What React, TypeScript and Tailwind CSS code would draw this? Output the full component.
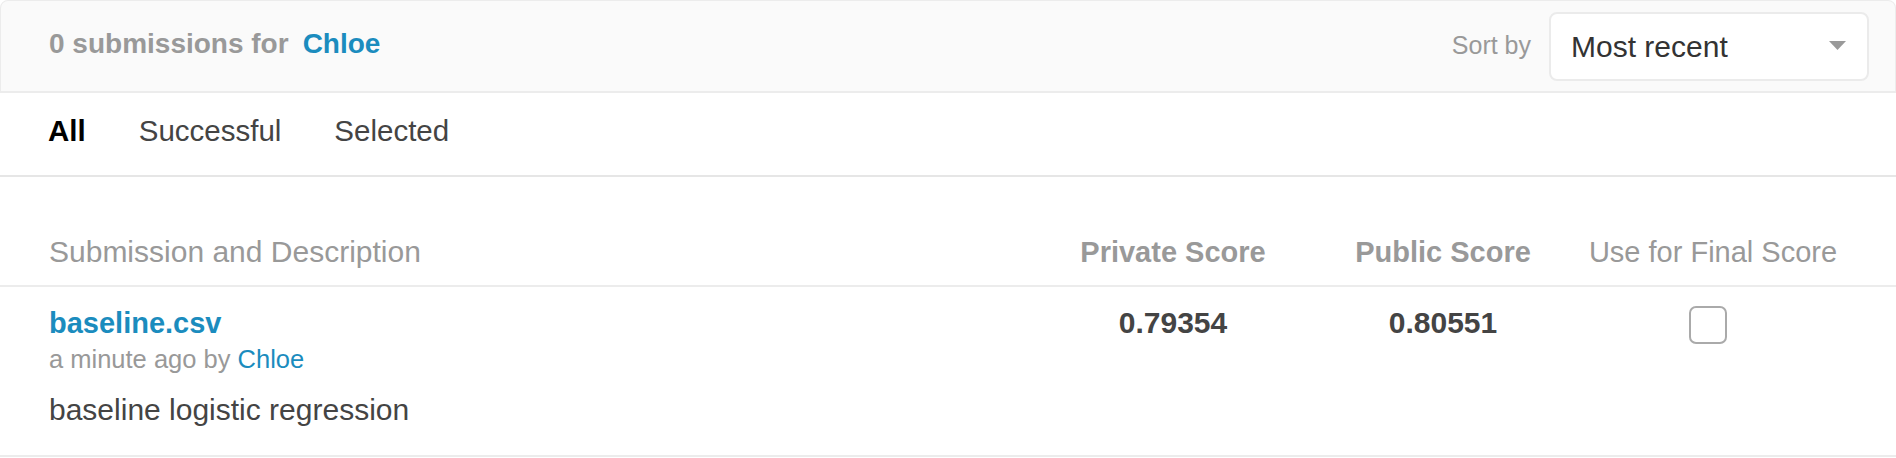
import React from 'react';

const BLUE = 'text-[#1b8cbe]';

const Header = () => (
  <div className="flex h-[93px] items-center justify-between rounded-t-[8px] border border-b-2 border-[#ececec] bg-[#fafafa] pl-[48px] pr-[26px]">
    <div className="mb-[4px] flex items-center gap-[14px] text-[28px] font-bold">
      <span className="text-[#999999]">0 submissions for</span>
      <span className={BLUE}>Chloe</span>
    </div>
    <div className="flex items-center gap-[18px]">
      <span className="text-[25px] text-[#999999]">Sort by</span>
      <div className="flex h-[69px] w-[320px] items-center justify-between rounded-[8px] border-2 border-[#ebebeb] bg-white pl-[20px] pr-[21px]">
        <span className="text-[30px] text-[#333333]">Most recent</span>
        <svg width="17" height="9" viewBox="0 0 17 9" className="mb-[2px]">
          <path d="M0 0 L17 0 L8.5 9 Z" fill="#9a9a9a" />
        </svg>
      </div>
    </div>
  </div>
);

const Tabs = () => {
  const tabs = ['All', 'Successful', 'Selected'];
  return (
    <div className="flex h-[84px] items-center gap-[53px] border-b-2 border-[#e6e6e6] pb-[5px] pl-[48px] text-[29.5px]">
      {tabs.map((t, i) => (
        <span key={t} className={i === 0 ? 'font-bold text-black' : 'text-[#444444]'}>
          {t}
        </span>
      ))}
    </div>
  );
};

const Table = () => (
  <div>
    <div className="grid grid-cols-[1fr_270px_270px_270px] items-center border-b-2 border-[#ececec] pb-[16px] pl-[49px] pr-[48px] pt-[58px] text-[29px] leading-[34px]">
      <span className="text-[30px] text-[#999999]">Submission and Description</span>
      <span className="text-center font-bold text-[#999999]">Private Score</span>
      <span className="text-center font-bold text-[#999999]">Public Score</span>
      <span className="text-center text-[#999999]">Use for Final Score</span>
    </div>
    <div className="grid grid-cols-[1fr_270px_270px_270px] items-start border-b-2 border-[#ececec] pb-[28px] pl-[49px] pr-[48px] pt-[19px]">
      <div className="flex flex-col">
        <span className={`text-[29px] font-bold leading-[34px] ${BLUE}`}>baseline.csv</span>
        <span className="mt-[4px] text-[25.5px] leading-[30px] text-[#999999]">
          a minute ago by <span className={BLUE}>Chloe</span>
        </span>
        <span className="mt-[19px] text-[30px] leading-[34px] text-[#444444]">
          baseline logistic regression
        </span>
      </div>
      <span className="text-center text-[30px] font-bold leading-[34px] text-[#444444]">0.79354</span>
      <span className="text-center text-[30px] font-bold leading-[34px] text-[#444444]">0.80551</span>
      <div className="flex justify-center pr-[10px]">
        <div className="h-[38px] w-[38px] rounded-[7px] border-2 border-[#aaaaaa] bg-white" />
      </div>
    </div>
  </div>
);

export default function App() {
  return (
    <div className="h-[458px] w-[1896px] bg-white font-['Liberation_Sans',Arial,sans-serif]">
      <Header />
      <Tabs />
      <Table />
    </div>
  );
}
